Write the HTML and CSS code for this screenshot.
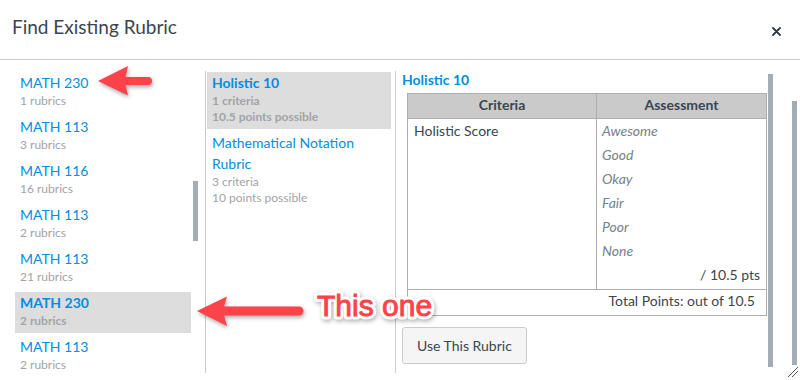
FILE: index.html
```html
<!DOCTYPE html>
<html lang="en">
<head>
    <meta charset="UTF-8">
    <meta name="viewport" content="width=device-width, initial-scale=1.0">
    <title>Find Existing Rubric</title>
    <link rel="stylesheet" href="styles.css">
</head>
<body>
    <div class="modal">
        <div class="modal-header">
            <h1 class="modal-title">Find Existing Rubric</h1>
            <button class="close-btn" aria-label="Close">
                <svg width="9" height="9" viewBox="0 0 9 9">
                    <path d="M1 1 L8 8 M8 1 L1 8" stroke="#2d3b45" stroke-width="1.8" stroke-linecap="round"/>
                </svg>
            </button>
        </div>

        <div class="modal-body">
            <div class="col col-courses">
                <ul class="pick-list">
                    <li class="pick-item">
                        <div class="pick-title">MATH 230</div>
                        <div class="pick-meta">1 rubrics</div>
                    </li>
                    <li class="pick-item">
                        <div class="pick-title">MATH 113</div>
                        <div class="pick-meta">3 rubrics</div>
                    </li>
                    <li class="pick-item">
                        <div class="pick-title">MATH 116</div>
                        <div class="pick-meta">16 rubrics</div>
                    </li>
                    <li class="pick-item">
                        <div class="pick-title">MATH 113</div>
                        <div class="pick-meta">2 rubrics</div>
                    </li>
                    <li class="pick-item">
                        <div class="pick-title">MATH 113</div>
                        <div class="pick-meta">21 rubrics</div>
                    </li>
                    <li class="pick-item selected">
                        <div class="pick-title">MATH 230</div>
                        <div class="pick-meta">2 rubrics</div>
                    </li>
                    <li class="pick-item">
                        <div class="pick-title">MATH 113</div>
                        <div class="pick-meta">2 rubrics</div>
                    </li>
                </ul>
                <div class="scroll-track"><div class="scroll-thumb thumb-courses"></div></div>
            </div>

            <div class="col col-rubrics">
                <ul class="pick-list">
                    <li class="pick-item selected">
                        <div class="pick-title">Holistic 10</div>
                        <div class="pick-meta">1 criteria</div>
                        <div class="pick-meta">10.5 points possible</div>
                    </li>
                    <li class="pick-item">
                        <div class="pick-title">Mathematical Notation Rubric</div>
                        <div class="pick-meta">3 criteria</div>
                        <div class="pick-meta">10 points possible</div>
                    </li>
                </ul>
            </div>

            <div class="col col-preview">
                <div class="preview">
                    <h2 class="preview-title">Holistic 10</h2>
                    <table class="rubric-table">
                        <colgroup>
                            <col class="col-criteria">
                            <col class="col-assessment">
                        </colgroup>
                        <thead>
                            <tr>
                                <th>Criteria</th>
                                <th>Assessment</th>
                            </tr>
                        </thead>
                        <tbody>
                            <tr>
                                <td class="criterion">Holistic Score</td>
                                <td class="ratings">
                                    <div class="rating">Awesome</div>
                                    <div class="rating">Good</div>
                                    <div class="rating">Okay</div>
                                    <div class="rating">Fair</div>
                                    <div class="rating">Poor</div>
                                    <div class="rating">None</div>
                                    <div class="points">/ 10.5 pts</div>
                                </td>
                            </tr>
                            <tr>
                                <td class="total" colspan="2">Total Points: out of 10.5</td>
                            </tr>
                        </tbody>
                    </table>
                    <button class="btn">Use This Rubric</button>
                </div>
                <div class="scroll-track"><div class="scroll-thumb thumb-preview"></div></div>
            </div>

            <div class="scroll-track window-track"><div class="scroll-thumb thumb-window"></div></div>
        </div>

        <!-- annotations drawn on top of the screenshot -->
        <svg class="callouts" width="800" height="380" viewBox="0 0 800 380">
            <path class="arrow" d="M98 81 L128 66 L125.5 77 L148 77 A4 4 0 0 1 148 85 L125.5 85 L128 95.5 Z"/>
            <path class="arrow" d="M197 311 L227 296.5 L224 306.5 L299 306.5 A4.5 4.5 0 0 1 299 315.5 L224 315.5 L227 326 Z"/>
            <text class="callout-halo" x="317" y="316">This one</text>
            <text class="callout-text" x="317" y="316">This one</text>
        </svg>

        <svg class="resize-handle" width="12" height="12" viewBox="0 0 12 12">
            <path d="M1 11 L11 1 M5 11 L11 5" stroke="#555" stroke-width="1"/>
        </svg>
    </div>
</body>
</html>
```

FILE: styles.css
```css
body {
    margin: 0;
    font-family: 'Lato', 'Noto Sans', sans-serif;
    color: #2d3b45;
    background-color: white;
}
.modal {
    width: 800px;
    height: 380px;
    position: relative;
    overflow: hidden;
    background-color: white;
}
.modal-header {
    display: flex;
    justify-content: space-between;
    align-items: flex-start;
    height: 60px;
    box-sizing: border-box;
    padding: 15px 19px 0 12px;
    border-bottom: 1px solid #c7cdd1;
}
.modal-title {
    margin: 0;
    font-size: 19px;
    font-weight: normal;
    line-height: 23px;
    color: #3a4650;
}
.close-btn {
    margin-top: 12px;
    padding: 0;
    border: none;
    background: none;
    width: 9px;
    height: 9px;
    display: flex;
}
.modal-body {
    display: flex;
    align-items: flex-start;
    height: 320px;
    box-sizing: border-box;
    padding-top: 11px;
}
.col {
    height: 302px;
    box-sizing: border-box;
    overflow: hidden;
}
.col-courses {
    width: 206px;
    display: flex;
    padding: 1px 0 0 15px;
    border-right: 1px solid #c7cdd1;
}
.col-rubrics {
    width: 190px;
    padding: 1px 4px 0 1px;
    border-right: 1px solid #c7cdd1;
}
.col-preview {
    display: flex;
    padding-left: 6px;
}
.pick-list {
    list-style: none;
    margin: 0;
    padding: 0;
    width: 176px;
    flex-shrink: 0;
}
.col-rubrics .pick-list {
    width: 184px;
}
.pick-item {
    padding: 0 5px 4px;
    margin-bottom: 3px;
}
.pick-title {
    font-size: 14px;
    line-height: 21px;
    color: #008ee2;
}
.pick-meta {
    font-size: 12px;
    line-height: 16px;
    color: #a0a4a8;
}
.pick-item.selected {
    background-color: #dddddd;
}
.pick-item.selected .pick-title,
.pick-item.selected .pick-meta {
    font-weight: bold;
}
.scroll-track {
    width: 5px;
    margin-left: 2px;
    flex-shrink: 0;
}
.scroll-thumb {
    width: 5px;
    background-color: #a5adb4;
}
.thumb-courses {
    margin-top: 109px;
    height: 60px;
}
.thumb-preview {
    margin-top: 3px;
    height: 293px;
}
.window-track {
    margin-left: 19px;
}
.thumb-window {
    margin-top: 30px;
    height: 264px;
}
.preview {
    width: 364px;
    flex-shrink: 0;
}
.preview-title {
    margin: 0 0 4px;
    font-size: 14px;
    line-height: 18px;
    font-weight: bold;
    color: #008ee2;
}
.rubric-table {
    margin-left: 5px;
    width: 359px;
    table-layout: fixed;
    border-collapse: collapse;
    font-size: 14px;
}
.col-criteria {
    width: 189px;
}
.col-assessment {
    width: 170px;
}
.rubric-table th,
.rubric-table td {
    border: 1px solid #adadad;
    padding: 0;
}
.rubric-table th {
    background-color: #cacaca;
    font-weight: bold;
    color: #3a4650;
    line-height: 22px;
    padding-bottom: 2px;
}
.rubric-table td {
    vertical-align: top;
    line-height: 24px;
    color: #3a4650;
}
.rubric-table .criterion {
    padding: 0 6px;
}
.rubric-table .ratings {
    padding: 0 6px 2px 5px;
}
.rating {
    font-style: italic;
    color: #76828c;
}
.points {
    text-align: right;
}
.rubric-table .total {
    text-align: right;
    line-height: 20px;
    padding: 1px 11px 4px;
}
.btn {
    margin-top: 11px;
    height: 37px;
    padding: 0 14px;
    font-family: 'Lato', 'Noto Sans', sans-serif;
    font-size: 14px;
    color: #3a4650;
    background-color: #f5f5f5;
    border: 1px solid #c7cdd1;
    border-radius: 3px;
}
.callouts {
    position: absolute;
    top: 0;
    left: 0;
    pointer-events: none;
}
.arrow {
    fill: #fb4349;
    filter: drop-shadow(1px 2px 2px rgba(0, 0, 0, 0.35));
}
.callout-halo,
.callout-text {
    font-family: 'Liberation Sans', Arial, sans-serif;
    font-size: 30px;
}
.callout-halo {
    fill: white;
    stroke: white;
    stroke-width: 7px;
    stroke-linejoin: round;
    filter: drop-shadow(1px 2px 2px rgba(0, 0, 0, 0.3));
}
.callout-text {
    fill: #fb4349;
    stroke: #fb4349;
    stroke-width: 0.9px;
}
.resize-handle {
    position: absolute;
    right: 1px;
    bottom: 2px;
}
```
